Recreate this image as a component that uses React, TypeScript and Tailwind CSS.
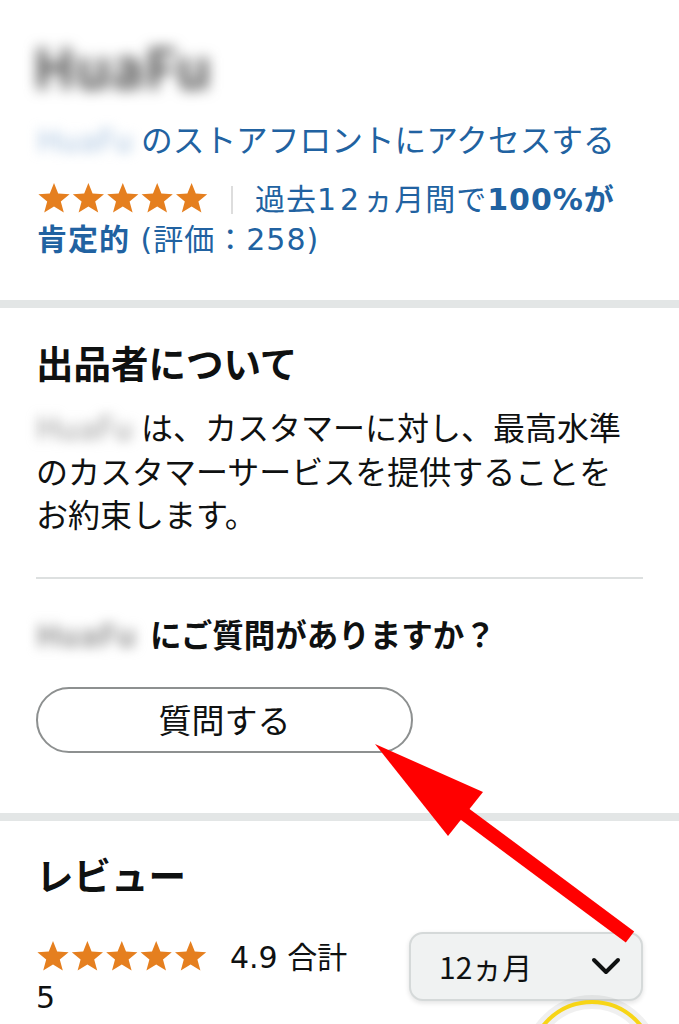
import React from 'react';

// Amazon-style five star row
const Stars: React.FC = () => (
    <svg width="172" height="32" viewBox="0 0 172 32" className="inline-block align-[-4px]">
        {[0, 1, 2, 3, 4].map((i) => (
            <polygon
                key={i}
                transform={`translate(${i * 34.4} 0)`}
                points="17,1 21.2,11.6 32.6,12.2 23.8,19.4 26.8,30.6 17,24.4 7.2,30.6 10.2,19.4 1.4,12.2 12.8,11.6"
                fill="#e57f1f"
            />
        ))}
    </svg>
);

const Blurred: React.FC<{ text: string; className: string }> = ({ text, className }) => (
    <span className={`inline-block select-none ${className}`}>{text}</span>
);

const App: React.FC = () => {
    return (
        <div className="relative w-full h-[1024px] overflow-hidden bg-white text-[#0f1111] font-['Noto_Sans_CJK_JP','Noto_Sans',sans-serif]">
            {/* Seller header */}
            <section className="px-[37px] pt-[36px] pb-[40px]">
                <div className="text-[56px] leading-[58px] font-bold -ml-[4px]">
                    <Blurred text="HuaFu" className="text-[#555] blur-[7px]" />
                </div>
                <div className="mt-[22px] text-[31.7px] leading-[44px] text-[#2162a1] whitespace-nowrap">
                    <Blurred text="HuaFu" className="text-[#a9c3df] blur-[6px] w-[104px]" />
                    のストアフロントにアクセスする
                </div>
                <div className="mt-[20px] text-[30px] leading-[40px] tracking-[1px] text-[#2162a1] font-['DejaVu_Sans','Noto_Sans_CJK_JP',sans-serif]">
                    <Stars />
                    <span className="inline-block w-[2px] h-[28px] bg-[#dddddd] mx-[22px] align-[-4px]" />
                    過去<span className="tracking-[4px]">12</span>ヵ月間で<span className="font-bold">100%が</span>
                    <br />
                    <span className="font-bold">肯定的</span> (評価：258)
                </div>
            </section>

            <div className="h-[8px] bg-[#e3e6e6]" />

            {/* About seller */}
            <section className="px-[36px] pt-[32px] pb-[60px]">
                <h2 className="text-[37.5px] leading-[44px] font-bold">出品者について</h2>
                <p className="mt-[21px] text-[32px] leading-[43.5px]">
                    <Blurred text="HuaFu" className="text-[#999] blur-[6px] w-[105px]" />
                    は、カスタマーに対し、最高水準のカスタマーサービスを提供することをお約束します。
                </p>
                <div className="mt-[41px] h-[2px] bg-[#dde0e0]" />
                <p className="mt-[34px] text-[31.5px] leading-[40px] font-bold">
                    <Blurred text="HuaFu" className="text-[#999] blur-[6px] w-[114px]" />
                    にご質問がありますか？
                </p>
                <button className="mt-[34px] w-[377px] h-[66px] rounded-full border-2 border-[#8d9090] bg-white text-[33px] text-[#0f1111]">
                    質問する
                </button>
            </section>

            <div className="h-[8px] bg-[#e3e6e6]" />

            {/* Reviews */}
            <section className="px-[36px] pt-[31px]">
                <h2 className="text-[37.5px] leading-[44px] font-bold">レビュー</h2>
                <div className="mt-[36px] flex items-start justify-between">
                    <p className="mt-[6px] text-[30px] leading-[40px] font-['DejaVu_Sans','Noto_Sans_CJK_JP',sans-serif]">
                        <Stars />
                        <span className="ml-[22px]">4.9 合計</span>
                        <br />5
                    </p>
                    <div className="w-[234px] h-[69px] rounded-[14px] border-2 border-[#d5d9d9] bg-[#f0f2f2] shadow-[0_2px_5px_rgba(15,17,17,0.12)] flex items-center justify-between pl-[28px] pr-[20px]">
                        <span className="text-[30px]">12ヵ月</span>
                        <svg width="30" height="20" viewBox="0 0 30 20">
                            <path d="M3 4 L15 16 L27 4" fill="none" stroke="#0f1111" strokeWidth="4" strokeLinecap="round" strokeLinejoin="round" />
                        </svg>
                    </div>
                </div>
            </section>

            {/* Annotation overlay */}
            <svg className="absolute inset-0 pointer-events-none" width="679" height="1024" viewBox="0 0 679 1024">
                <circle cx="592" cy="1064" r="62" fill="none" stroke="#000" strokeOpacity="0.06" strokeWidth="14" />
                <circle cx="592" cy="1064" r="62" fill="none" stroke="#f7d516" strokeWidth="4" />
                <line x1="462" y1="812" x2="630" y2="937" stroke="#ff0000" strokeWidth="14" />
                <polygon points="375,744 483,792 448,836" fill="#ff0000" />
            </svg>
        </div>
    );
};

export default App;
